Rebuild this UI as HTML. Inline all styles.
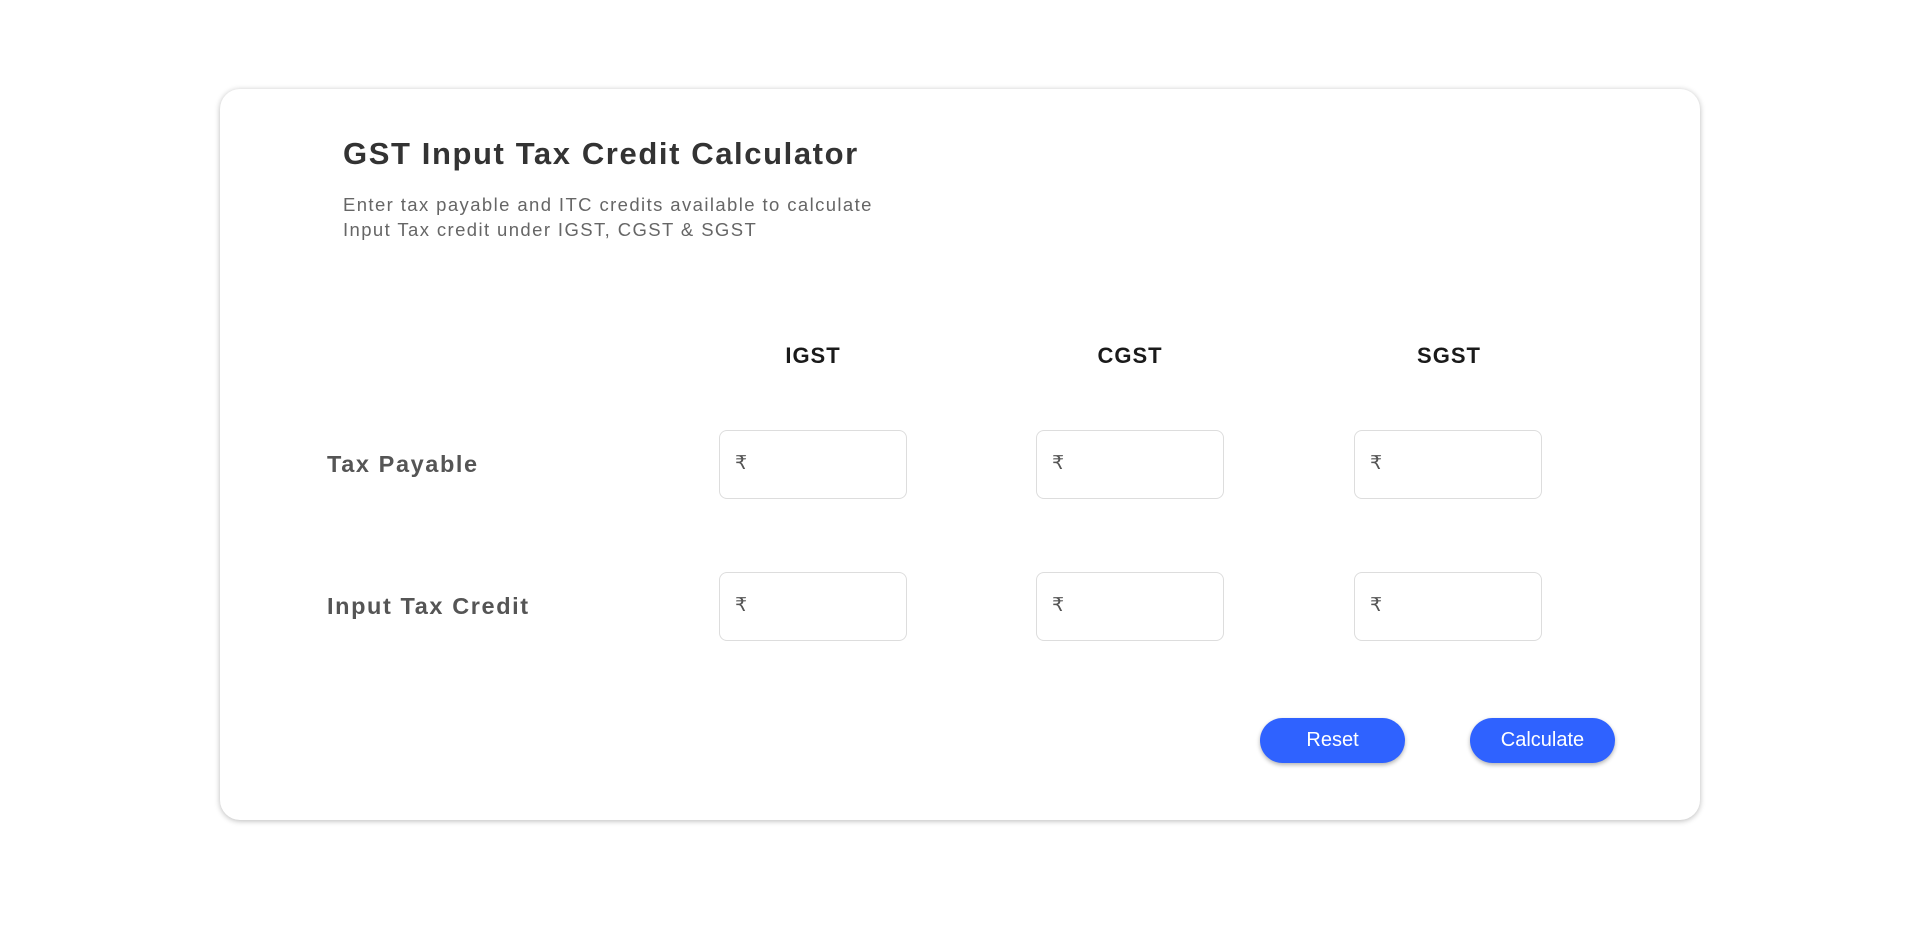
<!DOCTYPE html>
<html><head><meta charset="utf-8"><style>
html,body{margin:0;padding:0;background:#fff;width:1920px;height:928px;overflow:hidden;font-family:"Liberation Sans",Arial,sans-serif}
.card{position:absolute;left:220px;top:89px;width:1480px;height:731px;border-radius:20px;background:#fff;box-shadow:0 1px 6px rgba(0,0,0,0.28)}
.abs{position:absolute;white-space:nowrap}
h1{position:absolute;left:343px;top:136px;margin:0;font-size:31px;font-weight:600;color:#333;letter-spacing:1.6px}
.sub{left:343px;top:192px;font-size:18.5px;line-height:25px;color:#666;font-weight:300;letter-spacing:1.4px}
.hd{top:343px;font-size:22px;font-weight:600;color:#1a1a1a;width:200px;text-align:center;letter-spacing:1px}
.lb{font-size:23.5px;font-weight:600;color:#555;left:327px;letter-spacing:1.6px}
.in{position:absolute;width:188px;height:69px;border:1px solid #ddd;border-radius:8px;box-sizing:border-box}
.in span{position:absolute;left:15px;top:21px;font-size:19px;color:#555;font-family:"DejaVu Sans",sans-serif}
.btn{position:absolute;top:718px;width:145px;height:45px;border-radius:23px;background:#2f62ff;color:#fff;font-size:20px;text-align:center;line-height:45px;box-shadow:0 2px 4px rgba(0,0,0,0.3)}
</style></head><body>
<div class="card"></div>
<h1>GST Input Tax Credit Calculator</h1>
<div class="abs sub">Enter tax payable and ITC credits available to calculate<br>Input Tax credit under IGST, CGST &amp; SGST</div>
<div class="abs hd" style="left:713px">IGST</div>
<div class="abs hd" style="left:1030px">CGST</div>
<div class="abs hd" style="left:1349px">SGST</div>
<div class="abs lb" style="top:451px">Tax Payable</div>
<div class="abs lb" style="top:593px">Input Tax Credit</div>
<div class="in" style="left:719px;top:430px"><span>₹</span></div>
<div class="in" style="left:1036px;top:430px"><span>₹</span></div>
<div class="in" style="left:1354px;top:430px"><span>₹</span></div>
<div class="in" style="left:719px;top:572px"><span>₹</span></div>
<div class="in" style="left:1036px;top:572px"><span>₹</span></div>
<div class="in" style="left:1354px;top:572px"><span>₹</span></div>
<div class="btn" style="left:1260px">Reset</div>
<div class="btn" style="left:1470px">Calculate</div>
</body></html>
